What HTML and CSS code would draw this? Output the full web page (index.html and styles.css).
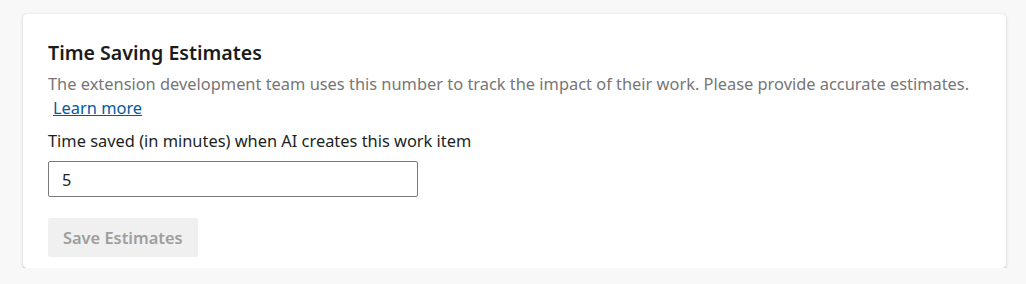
FILE: index.html
```html
<!DOCTYPE html>
<html lang="en">
<head>
<meta charset="UTF-8">
<title>Time Saving Estimates</title>
<link rel="stylesheet" href="styles.css">
</head>
<body>
<div class="card">
<h2 class="card-title">Time Saving Estimates</h2>
<p class="card-desc">The extension development team uses this number to track the impact of their work. Please provide accurate estimates. <a class="learn-more" href="#">Learn more</a></p>
<label class="field-label" for="minutes">Time saved (in minutes) when AI creates this work item</label>
<input id="minutes" class="field-input" type="text" value="5">
<div class="actions">
<button class="save-btn" disabled>Save Estimates</button>
</div>
</div>
</body>
</html>
```
FILE: styles.css
```css
*{
    box-sizing:border-box;
}
body{
    margin:0;
    background:#f8f8f8;
    font-family:"Noto Sans", "Open Sans", sans-serif;
    color:#201f1e;
}
.card{
    margin:14px 20px 0 23px;
    padding:25px 25px 11px;
    background:#fff;
    border-radius:4px;
    box-shadow:0 1.6px 3.6px 0 rgba(0,0,0,.16), 0 .3px .9px 0 rgba(0,0,0,.12);
}
.card-title{
    margin:0;
    font-size:19.6px;
    font-weight:600;
    line-height:28px;
    color:#1b1b1b;
}
.card-desc{
    margin:5px 0 0;
    font-size:16.4px;
    line-height:24px;
    color:#767676;
}
.learn-more{
    padding-left:5px;
    color:#005a9e;
    text-decoration:underline;
}
.field-label{
    display:block;
    margin-top:9px;
    font-size:16.4px;
    line-height:24px;
}
.field-input{
    display:block;
    width:370px;
    height:36px;
    margin-top:8px;
    padding:0 13px;
    border:1px solid #7a7a7a;
    border-radius:2px;
    font-family:inherit;
    font-size:16.4px;
    color:#201f1e;
    outline:none;
}
.actions{
    margin-top:21px;
}
.save-btn{
    height:39px;
    padding:0 15px;
    border:none;
    border-radius:2px;
    background:#f0f0f0;
    color:#9e9e9e;
    font-family:inherit;
    font-size:16.4px;
    font-weight:600;
}
```
